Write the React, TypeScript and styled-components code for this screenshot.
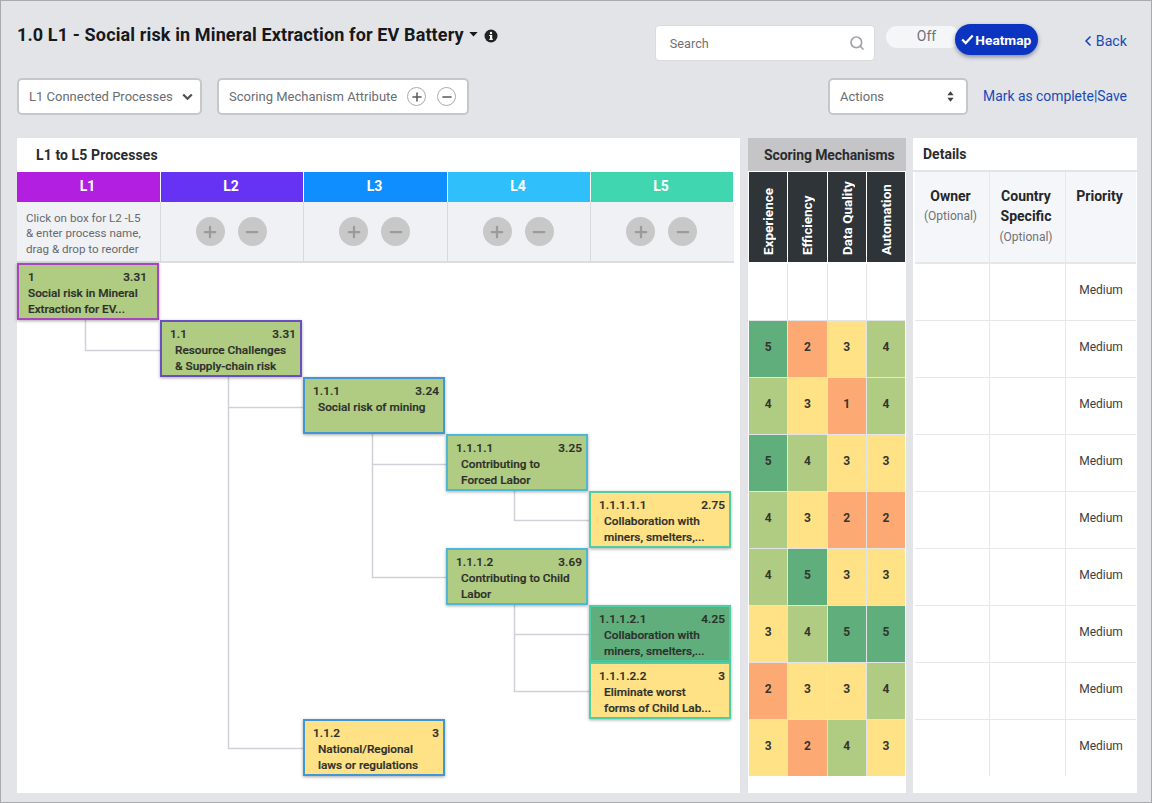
import React from 'react';
import styled, { createGlobalStyle } from 'styled-components';
import { Search, Plus, Minus, ChevronLeft } from 'lucide-react';

const Global = createGlobalStyle`
  html, body { margin: 0; padding: 0; background: #e3e4e8; }
  * { box-sizing: border-box; }
  body { font-family: Roboto, "Liberation Sans", sans-serif; }
`;

const Page = styled.div`
  width: 1152px;
  height: 803px;
  border: 1px solid #a9aaad;
  padding: 23px 14px 9px 16px;
  background: #e3e4e8;
  display: flex;
  flex-direction: column;
  overflow: hidden;
`;

const Row = styled.div<{ $gap?: number }>`
  display: flex;
  height: 37px;
  flex: none;
  margin-top: ${p => p.$gap ?? 0}px;
`;

const Title = styled.h1`
  margin: 0;
  font-size: 18px;
  line-height: 21px;
  font-weight: 700;
  letter-spacing: 0.13px;
  color: #17181a;
  display: flex;
  align-items: flex-start;
  white-space: nowrap;
`;

const TitleIcons = styled.span`
  display: flex;
  align-items: center;
  height: 21px;
  margin-left: 5px;
  gap: 6px;
  & > svg:last-child { margin-top: 3px; }
`;

const SearchBox = styled.div`
  margin-left: auto;
  margin-top: 1px;
  width: 220px;
  height: 36px;
  background: #fff;
  border: 1px solid #d9dade;
  border-radius: 4px;
  padding: 0 9px 0 14px;
  display: flex;
  align-items: center;
  justify-content: space-between;
  font-size: 12.7px;
  color: #6e7176;
`;

const Toggle = styled.div`
  margin-left: 11px;
  display: flex;
  align-items: flex-start;
`;

const OffPill = styled.div`
  margin-top: 2px;
  width: 74px;
  height: 22px;
  border-radius: 11px;
  background: #f5f6f8;
  color: #6e7176;
  font-size: 14px;
  line-height: 20px;
  padding-left: 31px;
`;

const HeatmapPill = styled.div`
  margin-left: -5px;
  width: 83px;
  height: 31px;
  border-radius: 16px;
  background: #0b35c0;
  color: #fff;
  font-size: 13.7px;
  font-weight: 700;
  display: flex;
  align-items: center;
  justify-content: center;
  gap: 1px;
  box-shadow: 0 2px 4px rgba(20, 30, 70, 0.45);
`;

const BackLink = styled.a`
  margin-left: 42px;
  margin-right: 10px;
  margin-top: 7px;
  height: 20px;
  display: flex;
  align-items: center;
  color: #1a49b8;
  font-size: 14.2px;
`;

const Control = styled.div<{ $w: number; $auto?: boolean }>`
  width: ${p => p.$w}px;
  height: 37px;
  margin-left: ${p => (p.$auto ? 'auto' : '0')};
  background: #fff;
  border: 2px solid #c6c7cb;
  border-radius: 5px;
  padding: 0 10px;
  display: flex;
  align-items: center;
  justify-content: space-between;
  font-size: 13px;
  color: #6a6d72;
  white-space: nowrap;
`;

const DropChevron = styled.svg`
  margin-right: -3px;
`;

const StepperArrows = styled.svg`
  margin-right: 2px;
`;

const AttrGroup = styled.div`
  margin-left: 15px;
`;

const RoundIcons = styled.span`
  display: flex;
  gap: 11px;
  margin-right: 1px;
`;

const OutlineCircle = styled.span`
  width: 19px;
  height: 19px;
  border-radius: 50%;
  border: 1px solid #a9abb0;
  color: #55585c;
  display: flex;
  align-items: center;
  justify-content: center;
`;

const Links = styled.div`
  margin-left: 15px;
  margin-right: 10px;
  line-height: 37px;
  color: #1a49b8;
  font-size: 13.9px;
  white-space: nowrap;
`;

const Panels = styled.div`
  margin-top: 23px;
  flex: 1;
  display: flex;
  min-height: 0;
`;

const ProcessPanel = styled.section`
  width: 723px;
  background: #fff;
`;

const PanelTitle = styled.div<{ $left: number; $h: number; $bg?: string; $track?: number }>`
  height: ${p => p.$h}px;
  padding-left: ${p => p.$left}px;
  background: ${p => p.$bg ?? '#fff'};
  display: flex;
  align-items: center;
  font-size: 14px;
  font-weight: 700;
  letter-spacing: ${p => p.$track ?? 0}px;
  color: #2a2c2e;
`;

const LevelGrid = styled.div`
  display: grid;
  grid-template-columns: 144px 143px 144px 143px 143px;
  width: 717px;
`;

const LevelHead = styled.div<{ $c: string }>`
  height: 30px;
  background: ${p => p.$c};
  border-right: 1px solid #fff;
  color: #fff;
  font-size: 14px;
  font-weight: 700;
  display: flex;
  align-items: center;
  justify-content: center;
  padding: 0 2px 2px 0;
  &:last-child { border-right: 0; }
`;

const LevelSub = styled.div`
  height: 61px;
  background: #f0f1f5;
  border-right: 1px solid #d8d9dd;
  border-bottom: 2px solid #dcdde1;
  padding-right: 2px;
  display: flex;
  align-items: center;
  justify-content: center;
  gap: 13px;
  &:last-child { border-right: 0; }
`;

const Hint = styled.div`
  font-size: 11.6px;
  line-height: 15.4px;
  color: #66696e;
  width: 100%;
  padding: 5px 0 0 9px;
  white-space: nowrap;
`;

const FilledCircle = styled.span`
  width: 29px;
  height: 29px;
  border-radius: 50%;
  background: #c8c8c9;
  color: #9b9b9c;
  display: flex;
  align-items: center;
  justify-content: center;
`;

const Canvas = styled.div`
  position: relative;
  display: grid;
  grid-template-columns: repeat(5, 143px);
  grid-template-rows: repeat(9, 57px);
`;

const Wires = styled.svg`
  position: absolute;
  left: 0;
  top: 0;
  width: 723px;
  height: 513px;
  pointer-events: none;
`;

const fills: Record<string, string> = {
  green: '#b0cc82',
  yellow: '#ffe285',
  dark: '#5fae7c',
  orange: '#fda974',
};

const levelBorder = ['#a946bf', '#6a4fc0', '#3f97d6', '#4db7d4', '#4ecda6'];

const Node = styled.div<{ $col: number; $row: number; $fill: string }>`
  position: relative;
  grid-column: ${p => p.$col + 1};
  grid-row: ${p => p.$row + 1};
  width: 142px;
  height: 57px;
  background: ${p => fills[p.$fill]};
  border: 2px solid ${p => levelBorder[p.$col]};
  box-shadow: 0 1px 3px rgba(0, 0, 0, 0.35);
  padding: 4px ${p => (p.$col === 0 ? 10 : 4)}px 0 ${p => (p.$col === 0 ? 9 : 8)}px;
  font-size: 11.8px;
  font-weight: 500;
  color: #2d2f2c;
  -webkit-text-stroke: 0.2px #2d2f2c;
`;

const NodeTop = styled.div`
  display: flex;
  justify-content: space-between;
  line-height: 16px;
  letter-spacing: 0.1px;
`;

const NodeText = styled.div<{ $indent: number }>`
  padding-left: ${p => p.$indent}px;
  padding-right: ${p => (p.$indent ? 8 : 0)}px;
  line-height: 16.4px;
`;

const ScoringPanel = styled.section`
  width: 158px;
  margin-left: 8px;
  background: #fff;
`;

const ScoreGrid = styled.div`
  display: grid;
  grid-template-columns: repeat(4, 1fr);
  gap: 1px;
  padding: 0 1px;
  background: #fff;
`;

const ScoreHeads = styled(ScoreGrid)`
  margin-top: 1px;
  margin-bottom: 2px;
`;

const ScoreRows = styled(ScoreGrid)`
  background: linear-gradient(#e3e4e8, #e3e4e8) content-box;
  grid-auto-rows: 56px;
`;

const ScoreHead = styled.div`
  height: 90px;
  background: #2e3438;
  display: flex;
  justify-content: center;
  align-items: flex-start;
`;

const ScoreHeadText = styled.span`
  writing-mode: vertical-rl;
  transform: rotate(180deg);
  color: #fff;
  font-size: 13.5px;
  font-weight: 700;
  white-space: nowrap;
  height: 83px;
`;

const heat: Record<number, string> = {
  0: '#fff',
  1: fills.orange,
  2: fills.orange,
  3: fills.yellow,
  4: fills.green,
  5: fills.dark,
};

const HeatCell = styled.div<{ $v: number }>`
  background: ${p => heat[p.$v]};
  display: flex;
  align-items: center;
  justify-content: center;
  padding-bottom: 5px;
  font-size: 12px;
  font-weight: 700;
  color: #33352f;
`;

const DetailsPanel = styled.section`
  width: 224px;
  margin-left: 7px;
  background: #fff;
`;

const DetailsTitle = styled(PanelTitle)`
  margin-bottom: 2px;
  box-shadow: 0 2px 0 #e3e4e8;
`;

const DetailsGrid = styled.div`
  display: grid;
  grid-template-columns: 74px 75px 70px;
  gap: 1px;
  margin-left: 2px;
  width: 221px;
  background: #e6e7ea;
`;

const DetailHead = styled.div`
  height: 90px;
  background: #f5f6f9;
  margin-bottom: 1px;
  padding: 14px 3px 0 0;
  text-align: center;
  font-size: 14px;
  font-weight: 700;
  line-height: 20.4px;
  color: #25272a;
`;

const Optional = styled.div`
  font-size: 12px;
  font-weight: 400;
  line-height: 21px;
  color: #6e7176;
`;

const DetailCell = styled.div`
  height: 56px;
  background: #fff;
  display: flex;
  align-items: center;
  justify-content: center;
  padding-bottom: 5px;
  font-size: 12px;
  color: #3c3e40;
`;

const levels = [
  { name: 'L1', color: '#b31fe0' },
  { name: 'L2', color: '#6633f5' },
  { name: 'L3', color: '#0f8fff' },
  { name: 'L4', color: '#2fc0fb' },
  { name: 'L5', color: '#40d6b0' },
];

const nodes = [
  { col: 0, row: 0, id: '1', score: '3.31', text: 'Social risk in Mineral Extraction for EV...', fill: 'green' },
  { col: 1, row: 1, id: '1.1', score: '3.31', text: 'Resource Challenges & Supply-chain risk', fill: 'green' },
  { col: 2, row: 2, id: '1.1.1', score: '3.24', text: 'Social risk of mining', fill: 'green' },
  { col: 3, row: 3, id: '1.1.1.1', score: '3.25', text: 'Contributing to Forced Labor', fill: 'green' },
  { col: 4, row: 4, id: '1.1.1.1.1', score: '2.75', text: 'Collaboration with miners, smelters,...', fill: 'yellow' },
  { col: 3, row: 5, id: '1.1.1.2', score: '3.69', text: 'Contributing to Child Labor', fill: 'green' },
  { col: 4, row: 6, id: '1.1.1.2.1', score: '4.25', text: 'Collaboration with miners, smelters,...', fill: 'dark' },
  { col: 4, row: 7, id: '1.1.1.2.2', score: '3', text: 'Eliminate worst forms of Child Lab...', fill: 'yellow' },
  { col: 2, row: 8, id: '1.1.2', score: '3', text: 'National/Regional laws or regulations', fill: 'yellow' },
];

const wires = [
  'M68.5 56V87.5H143',
  'M211.5 113V485.5H286M211.5 144.5H286',
  'M355.5 170V314.5H429M355.5 201.5H429',
  'M497.5 227V257.5H572',
  'M497.5 341V428.5H572M497.5 371.5H572',
];

const scores = [
  [0, 0, 0, 0],
  [5, 2, 3, 4],
  [4, 3, 1, 4],
  [5, 4, 3, 3],
  [4, 3, 2, 2],
  [4, 5, 3, 3],
  [3, 4, 5, 5],
  [2, 3, 3, 4],
  [3, 2, 4, 3],
];

const mechanisms = ['Experience', 'Efficiency', 'Data Quality', 'Automation'];

export default function App() {
  return (
    <Page>
      <Global />
      <Row>
        <Title>
          1.0 L1 - Social risk in Mineral Extraction for EV Battery
          <TitleIcons>
            <svg width="9" height="5" viewBox="0 0 10 6"><path d="M0 0h10L5 5.5z" fill="#17181a" /></svg>
            <svg width="14" height="14" viewBox="0 0 14 14">
              <circle cx="7" cy="7" r="6.5" fill="#222" />
              <rect x="6" y="6" width="2.2" height="4.6" fill="#fff" />
              <rect x="5.2" y="6" width="2" height="1" fill="#fff" />
              <rect x="5.2" y="9.8" width="3.8" height="1" fill="#fff" />
              <circle cx="7" cy="4" r="1.2" fill="#fff" />
            </svg>
          </TitleIcons>
        </Title>
        <SearchBox>
          Search
          <Search size={16} color="#a0a2a6" strokeWidth={2.5} />
        </SearchBox>
        <Toggle>
          <OffPill>Off</OffPill>
          <HeatmapPill>
            <svg width="13" height="11" viewBox="0 0 13 11"><path d="M1.2 5.5l3.5 3.6 7-7.6" fill="none" stroke="#fff" strokeWidth="2.2" /></svg>
            Heatmap
          </HeatmapPill>
        </Toggle>
        <BackLink>
          <ChevronLeft size={16} strokeWidth={2.6} />
          Back
        </BackLink>
      </Row>
      <Row $gap={17}>
        <Control $w={185}>
          L1 Connected Processes
          <DropChevron width="11" height="8" viewBox="0 0 11 8"><path d="M1.2 1.5l4.3 4.3 4.3-4.3" fill="none" stroke="#4c4f53" strokeWidth="2.2" /></DropChevron>
        </Control>
        <AttrGroup>
          <Control $w={252}>
            Scoring Mechanism Attribute
            <RoundIcons>
              <OutlineCircle><Plus size={14} strokeWidth={2.6} /></OutlineCircle>
              <OutlineCircle><Minus size={14} strokeWidth={2.6} /></OutlineCircle>
            </RoundIcons>
          </Control>
        </AttrGroup>
        <Control $w={140} $auto>
          Actions
          <StepperArrows width="7" height="11" viewBox="0 0 8 12"><path d="M4 0l3.6 4.6H.4zM4 12L.4 7.4h7.2z" fill="#3f4246" /></StepperArrows>
        </Control>
        <Links>Mark as complete|Save</Links>
      </Row>
      <Panels>
        <ProcessPanel>
          <PanelTitle $left={19} $h={34} $track={0.1}>L1 to L5 Processes</PanelTitle>
          <LevelGrid>
            {levels.map(l => <LevelHead key={l.name} $c={l.color}>{l.name}</LevelHead>)}
            {levels.map((l, i) => (
              <LevelSub key={l.name}>
                {i === 0 ? (
                  <Hint>Click on box for L2 -L5<br />&amp; enter process name,<br />drag &amp; drop to reorder</Hint>
                ) : (
                  <>
                    <FilledCircle><Plus size={18} strokeWidth={3} /></FilledCircle>
                    <FilledCircle><Minus size={18} strokeWidth={3} /></FilledCircle>
                  </>
                )}
              </LevelSub>
            ))}
          </LevelGrid>
          <Canvas>
            <Wires viewBox="0 0 723 513">
              {wires.map(d => <path key={d} d={d} fill="none" stroke="#d0d1d8" strokeWidth="1.5" />)}
            </Wires>
            {nodes.map(n => (
              <Node key={n.id} $col={n.col} $row={n.row} $fill={n.fill}>
                <NodeTop><span>{n.id}</span><span>{n.score}</span></NodeTop>
                <NodeText $indent={n.col === 0 ? 0 : 5}>{n.text}</NodeText>
              </Node>
            ))}
          </Canvas>
        </ProcessPanel>
        <ScoringPanel>
          <PanelTitle $left={16} $h={33} $bg="#c5c4c7" $track={-0.1}>Scoring Mechanisms</PanelTitle>
          <ScoreHeads>
            {mechanisms.map(m => (
              <ScoreHead key={m}><ScoreHeadText>{m}</ScoreHeadText></ScoreHead>
            ))}
          </ScoreHeads>
          <ScoreRows>
            {scores.flatMap((r, i) => r.map((v, j) => (
              <HeatCell key={`${i}-${j}`} $v={v}>{v || ''}</HeatCell>
            )))}
          </ScoreRows>
        </ScoringPanel>
        <DetailsPanel>
          <DetailsTitle $left={10} $h={32}>Details</DetailsTitle>
          <DetailsGrid>
            <DetailHead>Owner<Optional>(Optional)</Optional></DetailHead>
            <DetailHead>Country<br />Specific<Optional>(Optional)</Optional></DetailHead>
            <DetailHead>Priority</DetailHead>
            {scores.flatMap((_, i) => [
              <DetailCell key={`o${i}`} />,
              <DetailCell key={`c${i}`} />,
              <DetailCell key={`p${i}`}>Medium</DetailCell>,
            ])}
          </DetailsGrid>
        </DetailsPanel>
      </Panels>
    </Page>
  );
}
